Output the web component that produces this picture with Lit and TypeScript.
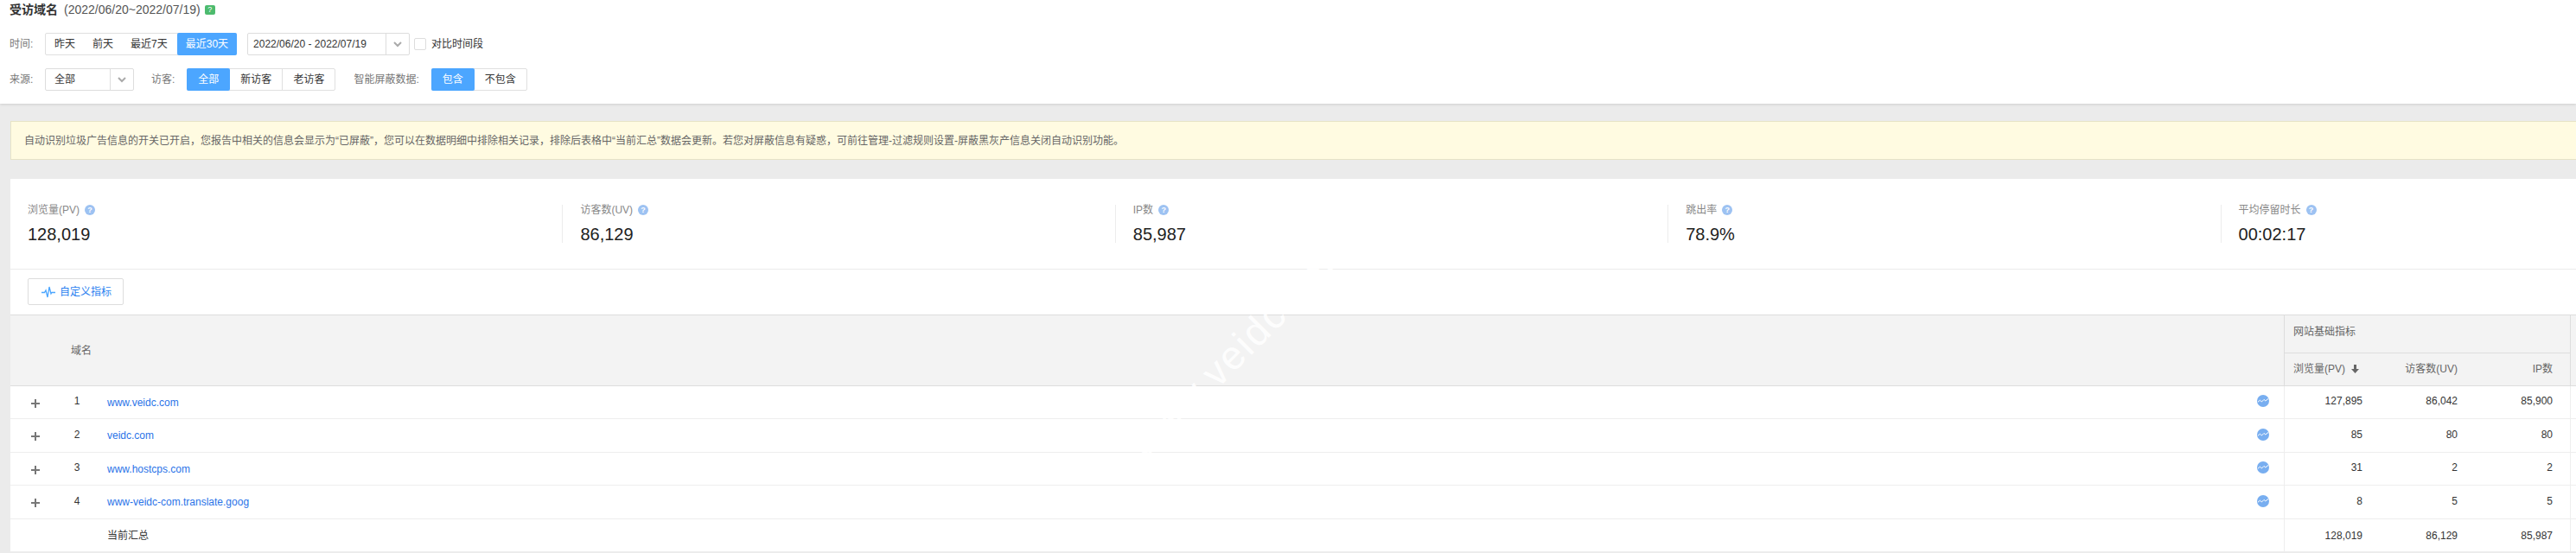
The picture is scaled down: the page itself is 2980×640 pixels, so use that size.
import { LitElement, html, css, svg } from "lit";
import { customElement } from "lit/decorators.js";

const chevron = html`<svg class="chev" viewBox="0 0 10 7" width="10" height="7"><path d="M1 1l4 4 4-4" fill="none" stroke="#aaa" stroke-width="2"/></svg>`;
const help = html`<span class="help">?</span>`;
const trend = html`<svg class="trend" viewBox="0 0 14 14" width="14" height="14"><circle cx="7" cy="7" r="7" fill="#78aef0"/><path d="M1 8.2l2.4-2 2 1.8 2.6-2.6 1.8 1.6L13 4.4" fill="none" stroke="#fff" stroke-width="1"/></svg>`;
const plus = svg`<svg class="plus" viewBox="0 0 10 10" width="10" height="10"><path d="M5 0v10M0 5h10" stroke="#777" stroke-width="2"/></svg>`;

const stats = [
  ["浏览量(PV)", "128,019"],
  ["访客数(UV)", "86,129"],
  ["IP数", "85,987"],
  ["跳出率", "78.9%"],
  ["平均停留时长", "00:02:17"],
];
const rows = [
  ["1", "www.veidc.com", "127,895", "86,042", "85,900"],
  ["2", "veidc.com", "85", "80", "80"],
  ["3", "www.hostcps.com", "31", "2", "2"],
  ["4", "www-veidc-com.translate.goog", "8", "5", "5"],
];

@customElement("app-root")
export class AppRoot extends LitElement {
  static styles = css`
    :host {
      display: block;
      position: relative;
      width: 2980px;
      height: 640px;
      overflow: hidden;
      background: #ebebeb;
      font: 12px/14px "Liberation Sans", "Noto Sans CJK SC", sans-serif;
      color: #333;
    }
    .header {
      height: 120px;
      box-sizing: border-box;
      background: #fff;
      box-shadow: 0 1px 3px rgba(0, 0, 0, 0.12);
      padding: 0 11px;
    }
    .title {
      display: flex;
      align-items: center;
      height: 22px;
      font-size: 14px;
      color: #555;
    }
    .title b {
      font-weight: 700;
      color: #333;
      margin-right: 7px;
    }
    .badge {
      width: 12px;
      height: 11px;
      margin-left: 5px;
      border-radius: 2px;
      background: #4dbb6e;
      color: #fff;
      font-size: 9px;
      line-height: 11px;
      text-align: center;
    }
    .row {
      display: flex;
      align-items: center;
      height: 26px;
    }
    .row.first { margin-top: 16px; }
    .row.second { margin-top: 15px; }
    .label { color: #777; }
    .w41 { width: 41px; }
    .visitor { margin: 0 14px 0 20px; }
    .smart { margin: 0 14px 0 21px; }
    .group {
      display: flex;
      height: 26px;
      box-sizing: border-box;
      border: 1px solid #e0e0e0;
      border-radius: 2px;
      background: #fff;
    }
    .group button {
      all: unset;
      display: flex;
      align-items: center;
      box-sizing: border-box;
      margin: -1px 0;
      padding: 0 10px;
      color: #333;
      white-space: nowrap;
    }
    .group button.on {
      background: #4ca6ff;
      color: #fff;
      border-radius: 2px;
    }
    .time .on { margin-left: 1px; margin-right: -1px; }
    .seg button { padding: 0 12px; }
    .seg button + button { border-left: 1px solid #e0e0e0; }
    .seg button.on { padding: 0 13px; margin-left: -1px; }
    .seg button.on + button { border-left: 0; }
    .select {
      display: flex;
      height: 26px;
      box-sizing: border-box;
      border: 1px solid #ddd;
      border-radius: 2px;
      align-items: stretch;
    }
    .select .val {
      flex: 1;
      display: flex;
      align-items: center;
      padding-left: 10px;
      border-right: 1px solid #ddd;
    }
    .select .arrow {
      width: 26px;
      display: flex;
      align-items: center;
      justify-content: center;
    }
    .date { width: 188px; margin-left: 12px; }
    .date .val { padding-left: 6px; }
    .source { width: 103px; }
    .check {
      width: 12px;
      height: 12px;
      margin: 0 6px 0 5px;
      border: 1px solid #ddd;
      border-radius: 2px;
      box-sizing: content-box;
    }
    .notice {
      width: 3197px;
      height: 45px;
      box-sizing: border-box;
      margin: 20px 0 22px 12px;
      padding-left: 15px;
      display: flex;
      align-items: center;
      background: #fffbe1;
      border: 1px solid #e6e3c6;
      color: #666;
      white-space: nowrap;
    }
    .card {
      margin-left: 12px;
      width: 3197px;
      background: #fff;
    }
    .stats {
      display: grid;
      grid-template-columns: repeat(5, 639.4px);
      margin-left: -1px;
      padding: 30px 0;
      border-bottom: 1px solid #ececec;
      height: 44px;
    }
    .stat {
      padding-left: 21px;
      height: 44px;
      box-sizing: border-box;
    }
    .stat + .stat { padding-left: 20px; border-left: 1px solid #ececec; }
    .stat-label {
      display: flex;
      align-items: center;
      height: 12px;
      line-height: 12px;
      color: #888;
    }
    .help {
      width: 12px;
      height: 12px;
      margin-left: 6px;
      border-radius: 50%;
      background: #9dc2f2;
      color: #fff;
      font-size: 9px;
      font-weight: 700;
      line-height: 12px;
      text-align: center;
    }
    .stat-value {
      margin-top: 12px;
      font-size: 20px;
      line-height: 20px;
      color: #222;
    }
    .tools {
      height: 52px;
      box-sizing: border-box;
      padding: 10px 0 0 20px;
    }
    .custom {
      display: inline-flex;
      align-items: center;
      gap: 5px;
      box-sizing: border-box;
      width: 111px;
      height: 31px;
      padding-left: 15px;
      border: 1px solid #ddd;
      border-radius: 2px;
      color: #2a7ff0;
    }
    .table { width: 2968px; }
    .thead {
      display: flex;
      height: 83px;
      box-sizing: border-box;
      background: #f3f3f3;
      border-top: 1px solid #ddd;
      border-bottom: 1px solid #ddd;
      color: #666;
    }
    .th-main {
      flex: 1;
      display: flex;
      align-items: center;
      padding-left: 70px;
      padding-top: 1px;
    }
    .th-metrics {
      width: 331px;
      box-sizing: border-box;
      border-left: 1px solid #ddd;
    }
    .th-tail {
      width: 7px;
      box-sizing: border-box;
      border-left: 1px solid #ddd;
    }
    .th-group {
      height: 44px;
      box-sizing: border-box;
      padding: 12px 0 0 10px;
      border-bottom: 1px solid #ddd;
    }
    .th-sub {
      display: grid;
      grid-template-columns: 99px 110px 121px;
      height: 37px;
      align-items: center;
    }
    .th-sub > div {
      display: flex;
      align-items: center;
      justify-content: flex-end;
      padding-right: 9px;
      padding-bottom: 1px;
    }
    .th-sub > div:first-child {
      justify-content: flex-start;
      padding-left: 10px;
      padding-right: 0;
      gap: 7px;
    }
    .th-sub > div:last-child { padding-right: 20px; }
    .tr {
      display: grid;
      grid-template-columns: 58px 38px 1fr 100px 110px 121px 7px;
      height: 38px;
      box-sizing: border-box;
      border-bottom: 1px solid #eee;
    }
    .tr:nth-child(even) { height: 39px; }
    .tr > div {
      display: flex;
      align-items: center;
      min-width: 0;
    }
    .tr .exp { justify-content: center; padding-top: 2px; }
    .tr .idx { justify-content: center; padding-bottom: 3px; }
    .tr .dom {
      justify-content: space-between;
      padding-left: 16px;
      padding-right: 17px;
    }
    .tr .dom a { color: #2a73e8; text-decoration: none; }
    .trend { margin-bottom: 3px; }
    .tr .num {
      justify-content: flex-end;
      padding-right: 9px;
      padding-bottom: 3px;
      border-left: 1px solid #eee;
      box-sizing: border-box;
    }
    .tr .n2, .tr .n3 { border-left: 0; }
    .tr .n3 { padding-right: 20px; }
    .tr .tail { border-left: 1px solid #eee; box-sizing: border-box; }
    .tr.total .dom { padding-bottom: 0; }
    .tr.total .num { padding-bottom: 0; }
    .mark {
      position: absolute;
      left: 1314px;
      top: 496px;
      font: 46px/52px "Liberation Sans", sans-serif;
      letter-spacing: 2px;
      color: rgba(255, 255, 255, 0.92);
      white-space: nowrap;
      transform: rotate(-45deg);
      transform-origin: 0 50%;
      pointer-events: none;
    }
  `;

  render() {
    return html`
      <div class="header">
        <div class="title"><b>受访域名</b>(2022/06/20~2022/07/19)<span class="badge">?</span></div>
        <div class="row first">
          <span class="label w41">时间:</span>
          <div class="group time">
            <button>昨天</button><button>前天</button><button>最近7天</button><button class="on">最近30天</button>
          </div>
          <div class="select date"><div class="val">2022/06/20 - 2022/07/19</div><div class="arrow">${chevron}</div></div>
          <span class="check"></span><span>对比时间段</span>
        </div>
        <div class="row second">
          <span class="label w41">来源:</span>
          <div class="select source"><div class="val">全部</div><div class="arrow">${chevron}</div></div>
          <span class="label visitor">访客:</span>
          <div class="group seg">
            <button class="on">全部</button><button>新访客</button><button>老访客</button>
          </div>
          <span class="label smart">智能屏蔽数据:</span>
          <div class="group seg">
            <button class="on">包含</button><button>不包含</button>
          </div>
        </div>
      </div>
      <div class="notice">自动识别垃圾广告信息的开关已开启，您报告中相关的信息会显示为“已屏蔽”，您可以在数据明细中排除相关记录，排除后表格中“当前汇总”数据会更新。若您对屏蔽信息有疑惑，可前往管理-过滤规则设置-屏蔽黑灰产信息关闭自动识别功能。</div>
      <div class="card">
        <div class="stats">
          ${stats.map(
            ([l, v]) => html`<div class="stat">
              <div class="stat-label">${l}${help}</div>
              <div class="stat-value">${v}</div>
            </div>`
          )}
        </div>
        <div class="tools">
          <div class="custom">
            <svg viewBox="0 0 16 16" width="16" height="16"><path d="M0 8.5h3.5l1.5-2.5 2 8 2-12 2 8 1-1.5H16" fill="none" stroke="#4ca6ff" stroke-width="1.3"/></svg>
            <span>自定义指标</span>
          </div>
        </div>
        <div class="table">
          <div class="thead">
            <div class="th-main">域名</div>
            <div class="th-metrics">
              <div class="th-group">网站基础指标</div>
              <div class="th-sub">
                <div>浏览量(PV)
                  <svg viewBox="0 0 9 10" width="9" height="10"><path d="M3 0h3v5h3L4.5 10 0 5h3z" fill="#666"/></svg>
                </div>
                <div>访客数(UV)</div>
                <div>IP数</div>
              </div>
            </div>
            <div class="th-tail"></div>
          </div>
          <div class="tbody">
            ${rows.map(
              (r) => html`<div class="tr">
                <div class="exp">${plus}</div>
                <div class="idx">${r[0]}</div>
                <div class="dom"><a>${r[1]}</a>${trend}</div>
                <div class="num">${r[2]}</div>
                <div class="num n2">${r[3]}</div>
                <div class="num n3">${r[4]}</div>
                <div class="tail"></div>
              </div>`
            )}
            <div class="tr total">
              <div></div>
              <div></div>
              <div class="dom"><span>当前汇总</span></div>
              <div class="num">128,019</div>
              <div class="num n2">86,129</div>
              <div class="num n3">85,987</div>
              <div class="tail"></div>
            </div>
          </div>
        </div>
      </div>
      <div class="mark">www.veidc.com</div>
    `;
  }
}
